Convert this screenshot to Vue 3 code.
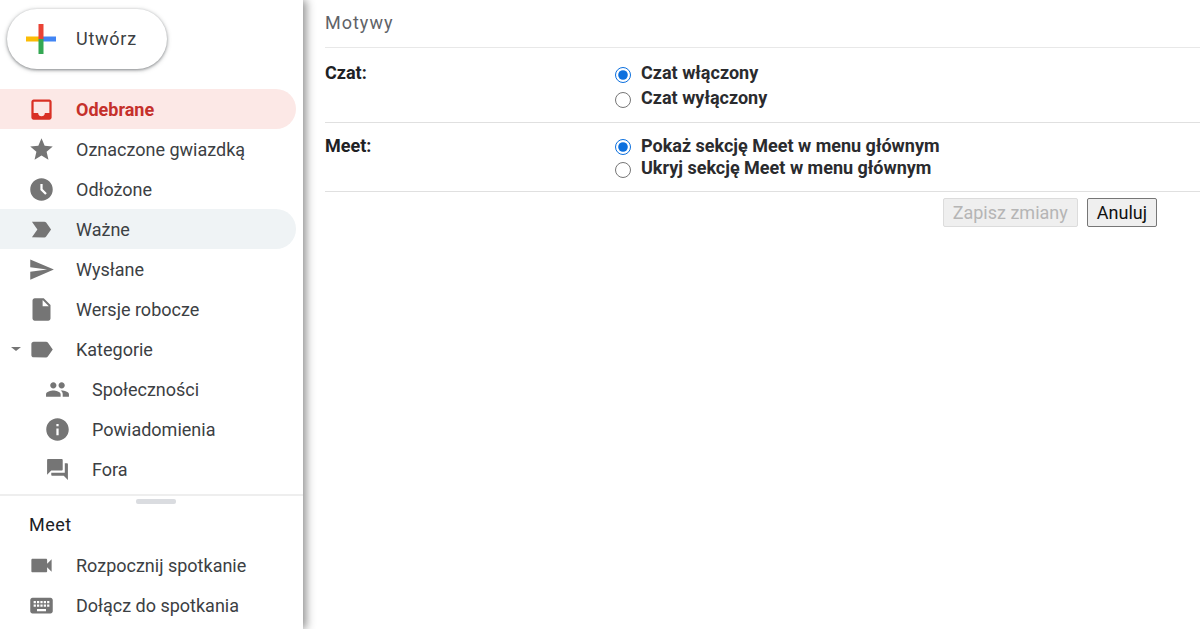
<template>
  <div class="page">
    <aside class="sidebar">
      <button class="compose">
        <svg class="plus" viewBox="0 0 30 30" width="30" height="30">
          <rect x="0" y="12.5" width="15" height="5" fill="#fbbc05" />
          <rect x="15" y="12.5" width="15" height="5" fill="#4285f4" />
          <rect x="12.5" y="15" width="5" height="15" fill="#34a853" />
          <rect x="12.5" y="0" width="5" height="15" fill="#ea4335" />
        </svg>
        <span class="compose-label">Utwórz</span>
      </button>

      <nav class="nav">
        <div
          v-for="item in navItems"
          :key="item.label"
          class="nav-item"
          :class="{ active: item.active, hovered: item.hovered, sub: item.sub }"
        >
          <span v-if="item.caret" class="caret"></span>
          <svg class="icon" :class="{ small: item.small }" viewBox="0 0 24 24"><path :d="item.icon" /></svg>
          <span class="nav-label">{{ item.label }}</span>
        </div>
      </nav>

      <div class="meet">
        <div class="handle"></div>
        <div class="meet-title">Meet</div>
        <div v-for="item in meetItems" :key="item.label" class="nav-item">
          <svg class="icon" viewBox="0 0 24 24"><path :d="item.icon" /></svg>
          <span class="nav-label">{{ item.label }}</span>
        </div>
      </div>
    </aside>

    <main class="content">
      <div class="tab-header">Motywy</div>

      <div v-for="row in settings" :key="row.title" class="setting" :class="row.name">
        <div class="setting-title">{{ row.title }}</div>
        <div class="setting-options">
          <label v-for="(opt, i) in row.options" :key="opt" class="option">
            <input type="radio" :name="row.name" :checked="i === 0" />
            <span>{{ opt }}</span>
          </label>
        </div>
      </div>

      <div class="actions">
        <button class="btn" disabled>Zapisz zmiany</button>
        <button class="btn">Anuluj</button>
      </div>
    </main>
  </div>
</template>

<script setup>
const navItems = [
  {
    label: "Odebrane",
    active: true,
    icon: "M19 3H5c-1.1 0-2 .9-2 2v14c0 1.1.9 2 2 2h14c1.1 0 2-.9 2-2V5c0-1.1-.9-2-2-2zm0 12h-4c0 1.66-1.34 3-3 3s-3-1.34-3-3H5V5h14v10z",
  },
  {
    label: "Oznaczone gwiazdką",
    icon: "M12 17.27L18.18 21l-1.64-7.03L22 9.24l-7.19-.61L12 2 9.19 8.63 2 9.24l5.46 4.73L5.82 21z",
  },
  {
    label: "Odłożone",
    icon: "M11.99 2C6.47 2 2 6.48 2 12s4.47 10 9.99 10C17.52 22 22 17.52 22 12S17.52 2 11.99 2zm3.3 14.71L11 12.41V7h2v4.59l3.71 3.71-1.42 1.41z",
  },
  {
    label: "Ważne",
    hovered: true,
    icon: "M3.5 18.99l11 .01c.67 0 1.27-.33 1.63-.84L20.5 12l-4.37-6.16c-.36-.51-.96-.84-1.63-.84l-11 .01L8.34 12 3.5 18.99z",
  },
  {
    label: "Wysłane",
    icon: "M2.01 21L23 12 2.01 3 2 10l15 2-15 2z",
  },
  {
    label: "Wersje robocze",
    icon: "M6 2c-1.1 0-1.99.9-1.99 2L4 20c0 1.1.89 2 1.99 2H18c1.1 0 2-.9 2-2V8l-6-6H6zm7 7V3.5L18.5 9H13z",
  },
  {
    label: "Kategorie",
    caret: true,
    icon: "M17.63 5.84C17.27 5.33 16.67 5 16 5L5 5.01C3.9 5.01 3 5.9 3 7v10c0 1.1.9 1.99 2 1.99L16 19c.67 0 1.27-.33 1.63-.84L22 12l-4.37-6.16z",
  },
  {
    label: "Społeczności",
    sub: true,
    small: true,
    icon: "M16 11c1.66 0 2.99-1.34 2.99-3S17.66 5 16 5c-1.66 0-3 1.34-3 3s1.34 3 3 3zm-8 0c1.66 0 2.99-1.34 2.99-3S9.66 5 8 5C6.34 5 5 6.34 5 8s1.34 3 3 3zm0 2c-2.33 0-7 1.17-7 3.5V19h14v-2.5c0-2.33-4.67-3.5-7-3.5zm8 0c-.29 0-.62.02-.97.05 1.16.84 1.97 1.97 1.97 3.45V19h6v-2.5c0-2.33-4.67-3.5-7-3.5z",
  },
  {
    label: "Powiadomienia",
    sub: true,
    icon: "M12 2C6.48 2 2 6.48 2 12s4.48 10 10 10 10-4.48 10-10S17.52 2 12 2zm1 15h-2v-6h2v6zm0-8h-2V7h2v2z",
  },
  {
    label: "Fora",
    sub: true,
    small: true,
    icon: "M21 6h-2v9H6v2c0 .55.45 1 1 1h11l4 4V7c0-.55-.45-1-1-1zm-4 6V3c0-.55-.45-1-1-1H3c-.55 0-1 .45-1 1v14l4-4h10c.55 0 1-.45 1-1z",
  },
];

const meetItems = [
  {
    label: "Rozpocznij spotkanie",
    icon: "M17 10.5V7c0-.55-.45-1-1-1H4c-.55 0-1 .45-1 1v10c0 .55.45 1 1 1h12c.55 0 1-.45 1-1v-3.5l4 4v-11l-4 4z",
  },
  {
    label: "Dołącz do spotkania",
    icon: "M20 5H4c-1.1 0-1.99.9-1.99 2L2 17c0 1.1.9 2 2 2h16c1.1 0 2-.9 2-2V7c0-1.1-.9-2-2-2zm-9 3h2v2h-2V8zm0 3h2v2h-2v-2zM8 8h2v2H8V8zm0 3h2v2H8v-2zm-1 2H5v-2h2v2zm0-3H5V8h2v2zm9 7H8v-2h8v2zm0-4h-2v-2h2v2zm0-3h-2V8h2v2zm3 3h-2v-2h2v2zm0-3h-2V8h2v2z",
  },
];

const settings = [
  { name: "chat", title: "Czat:", options: ["Czat włączony", "Czat wyłączony"] },
  {
    name: "meet-row",
    title: "Meet:",
    options: ["Pokaż sekcję Meet w menu głównym", "Ukryj sekcję Meet w menu głównym"],
  },
];
</script>

<style scoped>
.page {
  display: flex;
  width: 1200px;
  height: 629px;
  overflow: hidden;
  background: #fff;
  font-family: Roboto, "Liberation Sans", sans-serif;
  color: #202124;
}

.sidebar {
  width: 303px;
  flex: none;
  display: flex;
  flex-direction: column;
  box-shadow: 3px 0 9px rgba(0, 0, 0, 0.45);
  background: #fff;
  z-index: 1;
}

.compose {
  display: flex;
  align-items: center;
  gap: 20px;
  width: 160px;
  height: 60px;
  margin: 9px 0 20px 7px;
  padding: 0 0 0 19px;
  border: none;
  border-radius: 30px;
  background: #fff;
  box-shadow: 0 1px 3px rgba(60, 64, 67, 0.5), 0 1px 5px rgba(60, 64, 67, 0.25);
  font: 400 18px Roboto, sans-serif;
  letter-spacing: 0.75px;
  color: #3c4043;
}

.compose-label {
  margin-bottom: 2px;
}

.plus {
  flex: none;
}

.nav-item {
  position: relative;
  display: flex;
  align-items: center;
  gap: 21px;
  width: 296px;
  height: 40px;
  padding-left: 28px;
  box-sizing: border-box;
  border-radius: 0 20px 20px 0;
  font-size: 18px;
  color: #3c4043;
  white-space: nowrap;
}

.nav-item.sub {
  padding-left: 44px;
}

.nav-item.active {
  background: #fce8e6;
  color: #c5302b;
  font-weight: 700;
}

.nav-item.active .icon {
  fill: #d93025;
}

.nav-item.hovered {
  background: #eff3f5;
}

.icon {
  flex: none;
  width: 27px;
  height: 27px;
  fill: #757575;
}

.icon.small {
  width: 25px;
  height: 25px;
  margin: 0 1px;
}

.caret {
  position: absolute;
  left: 11px;
  top: 18px;
  border-left: 5px solid transparent;
  border-right: 5px solid transparent;
  border-top: 4px solid #757575;
}

.meet {
  margin-top: 5px;
  border-top: 2px solid #eeeeee;
}

.handle {
  width: 40px;
  height: 5px;
  margin: 3px 0 0 136px;
  border-radius: 2px;
  background: #dadce0;
}

.meet-title {
  height: 41px;
  padding: 9px 0 0 29px;
  box-sizing: border-box;
  font-size: 18px;
  font-weight: 400;
  letter-spacing: 0.5px;
  line-height: 24px;
  color: #202124;
}

.content {
  flex: 1;
  padding-left: 22px;
  font-size: 18px;
}

.tab-header {
  height: 48px;
  box-sizing: border-box;
  border-bottom: 1px solid #e8e8e8;
  line-height: 46px;
  font-size: 18px;
  font-weight: 400;
  letter-spacing: 1px;
  color: #5f6368;
}

.setting {
  display: flex;
  box-sizing: border-box;
  border-bottom: 1px solid #e0e0e0;
}

.setting.chat {
  height: 75px;
  padding-top: 12px;
}

.setting.meet-row {
  height: 69px;
  padding-top: 11px;
}

.setting-title {
  width: 290px;
  font-weight: 700;
  font-size: 18px;
  line-height: 24px;
  color: #202124;
}

.chat .setting-title {
  padding-top: 1px;
}

.option {
  display: flex;
  align-items: center;
  gap: 10px;
  font-weight: 700;
  font-size: 18px;
  color: #2a2b2e;
}

.chat .option {
  height: 25px;
}

.meet-row .option {
  height: 23px;
}

.meet-row .option + .option {
  margin-top: -1px;
}

.option input {
  width: 16px;
  height: 16px;
  margin: 3px 0 0;
  accent-color: #0b6fde;
}

.chat .option input {
  margin-top: 5px;
}

.meet-row .option + .option input {
  margin-top: 5px;
}

.actions {
  display: flex;
  justify-content: flex-end;
  gap: 9px;
  padding: 6px 43px 0 0;
}

.btn {
  height: 29px;
  padding: 0 9px;
  border: 1px solid #767676;
  border-radius: 2px;
  background: #efefef;
  font: 400 18px Roboto, sans-serif;
  color: #111;
}

.btn:disabled {
  border-color: #dcdcdc;
  color: #b5b5b5;
}
</style>

<style>
html,
body {
  margin: 0;
  overflow: hidden;
}
</style>
